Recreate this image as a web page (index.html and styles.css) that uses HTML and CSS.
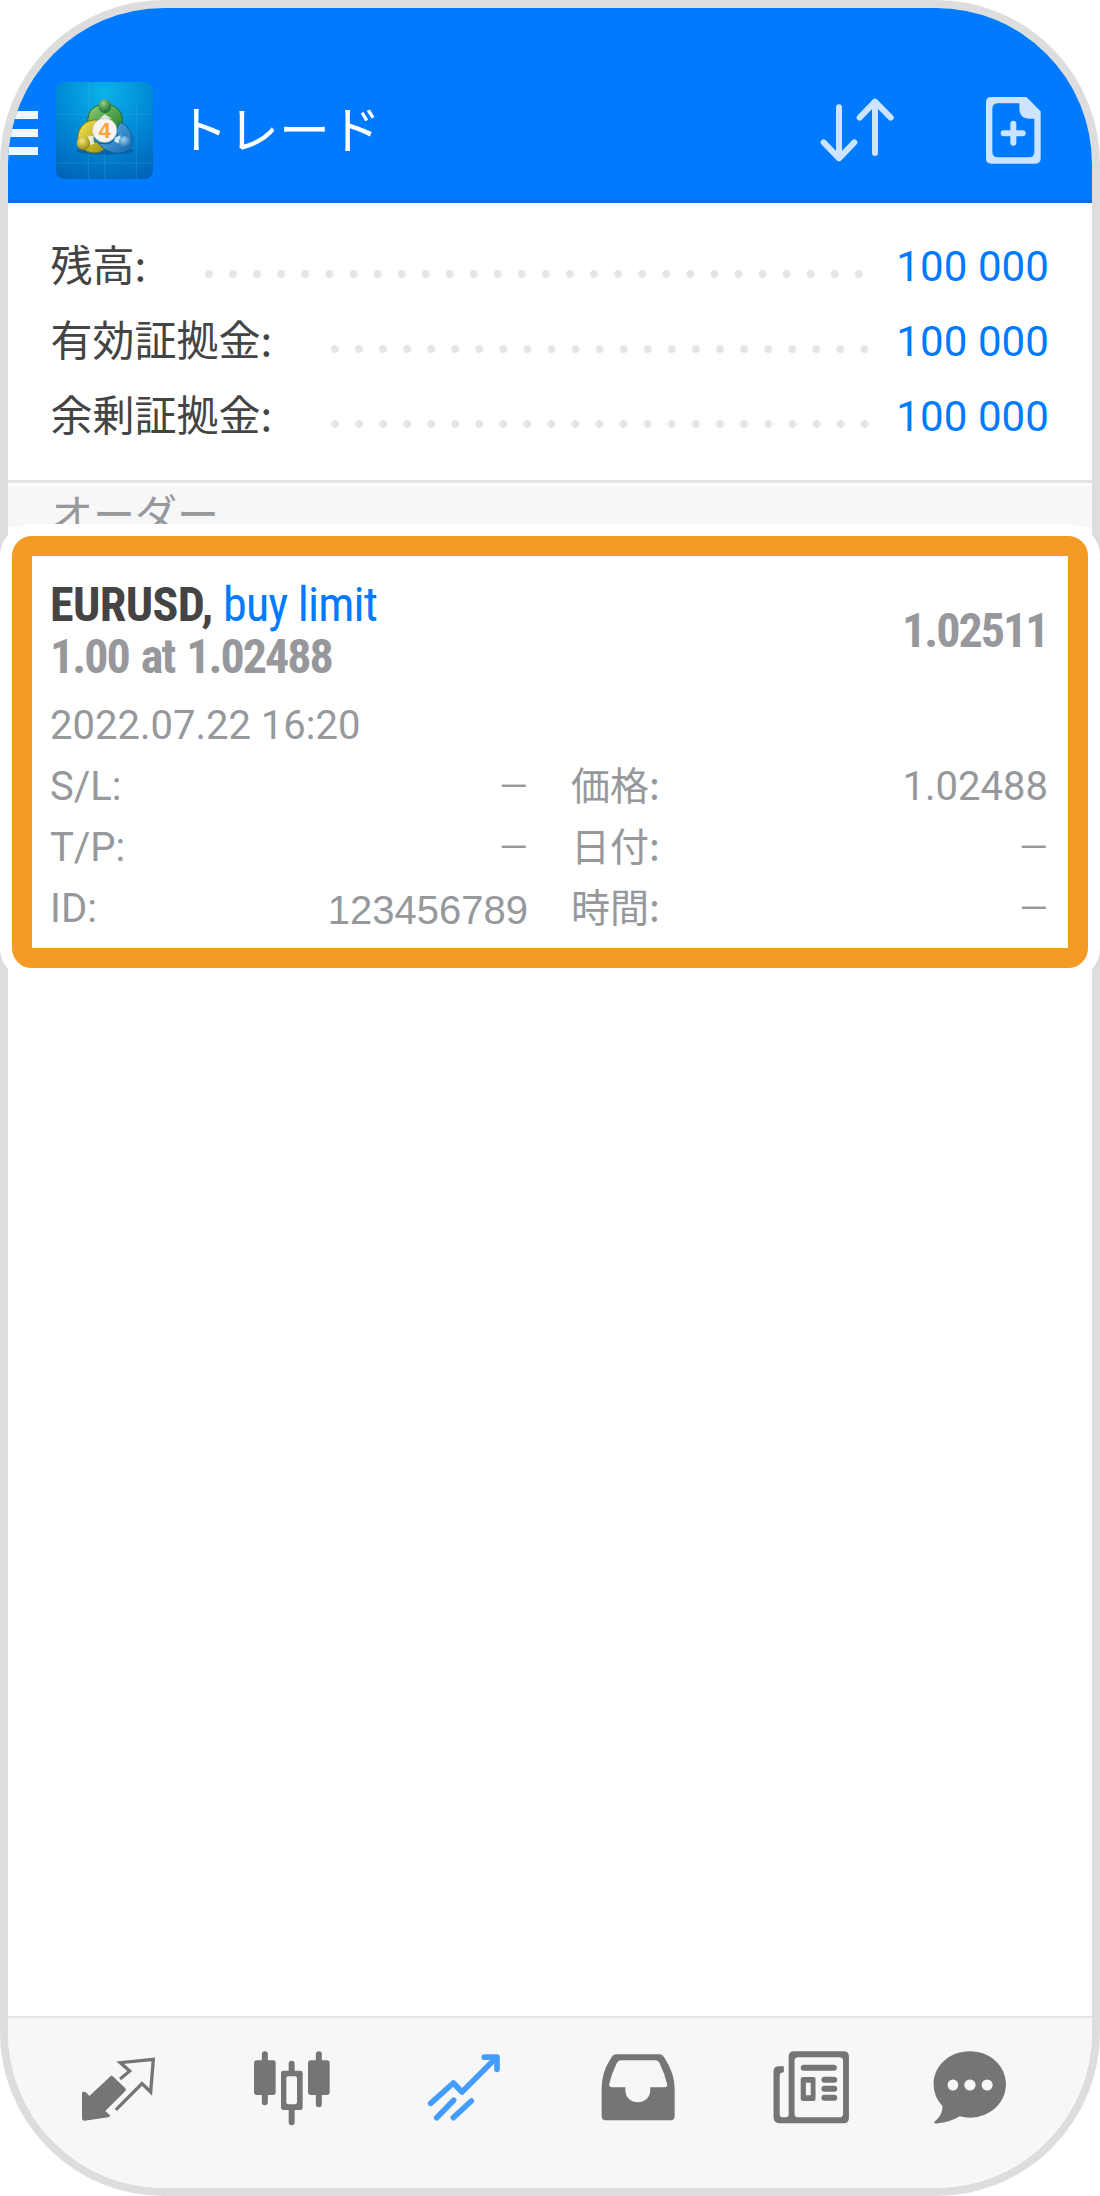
FILE: index.html
```html
<!DOCTYPE html>
<html lang="ja">
<head>
<meta charset="utf-8">
<title>トレード</title>
<link rel="stylesheet" href="styles.css">
</head>
<body>
<div class="phone">
  <header class="topbar">
    <div class="menu"><i></i><i></i><i></i></div>
    <svg class="logo" viewBox="48 36 291 291">
      <defs>
        <radialGradient id="tile" cx=".5" cy=".1" r="1"><stop offset="0" stop-color="#0bb2ea"/><stop offset=".5" stop-color="#0089d4"/><stop offset="1" stop-color="#0062b6"/></radialGradient>
        <linearGradient id="green" x2="1" y2="1"><stop offset="0" stop-color="#8fce74"/><stop offset="1" stop-color="#1f7a2c"/></linearGradient>
        <linearGradient id="gold" x2="1" y2="1"><stop offset="0" stop-color="#f4e650"/><stop offset="1" stop-color="#a39412"/></linearGradient>
        <linearGradient id="blue" x2="1" y2="1"><stop offset="0" stop-color="#5cb7ea"/><stop offset="1" stop-color="#1668ae"/></linearGradient>
        <radialGradient id="ballGreen" cx=".4" cy=".3" r=".7"><stop offset="0" stop-color="#8fd08a"/><stop offset="1" stop-color="#1c6b2c"/></radialGradient>
        <radialGradient id="ballGold" cx=".4" cy=".3" r=".7"><stop offset="0" stop-color="#f3ea80"/><stop offset="1" stop-color="#94850f"/></radialGradient>
        <radialGradient id="ballBlue" cx=".4" cy=".3" r=".7"><stop offset="0" stop-color="#9bd4f5"/><stop offset="1" stop-color="#1a6cb2"/></radialGradient>
      </defs>
      <rect x="48" y="36" width="291" height="291" rx="25" fill="url(#tile)"/>
      <path d="M145 36V326M289 95V326M48 133H339M48 279H339M194 240V326" stroke="#5cc0ee" stroke-opacity=".28" stroke-width="2.5"/>
      <ellipse cx="195" cy="242" rx="86" ry="12" fill="#00427e" opacity=".45"/>
      <path d="M144 158C140 120 165 103 195 103S252 122 246 160L236 188 210 150 195 138 178 150Z" fill="url(#green)" stroke="#1d6b32" stroke-width="3"/>
      <path d="M171 150C132 148 108 180 115 216 128 248 168 258 192 238L180 218 160 215Z" fill="url(#gold)" stroke="#827713" stroke-width="3"/>
      <path d="M240 158C268 165 282 198 274 232 248 262 198 250 174 219L205 222 232 205 230 178Z" fill="url(#blue)" stroke="#155f9c" stroke-width="3"/>
      <path d="M178 146L194 133 216 146Z M144 197L160 198 162 222 150 225Z M226 202L242 196 240 222 222 214Z" fill="#e6f3ec" opacity=".9"/>
      <ellipse cx="194" cy="108" rx="19" ry="21" fill="url(#ballGreen)"/>
      <circle cx="130" cy="220" r="20" fill="url(#ballGold)"/>
      <circle cx="254" cy="216" r="18" fill="url(#ballBlue)"/>
      <circle cx="194" cy="181" r="36" fill="#f6f4f2" stroke="#d5cfc8" stroke-width="2"/>
      <text class="logo-digit" x="194" y="205" text-anchor="middle">4</text>
    </svg>
    <h1>トレード</h1>
    <svg class="sort" viewBox="120 110 224 200" fill="none" stroke="#cce4ff" stroke-width="18" stroke-linecap="round" stroke-linejoin="round">
      <path d="M177 141V294M131 246L177 294 223 246M285 278V124M239 172L285 124 332 172"/>
    </svg>
    <svg class="new" viewBox="619 112 164 200">
      <path fill="#cce4ff" fill-rule="evenodd" d="M635 112H740L783 155V296Q783 312 767 312H635Q619 312 619 296V128Q619 112 635 112ZM655 131Q638 131 638 148V276Q638 293 655 293H748Q764 293 764 276V177H750Q719 177 719 145V131Z"/>
      <path d="M701 192V249M672 221H729" stroke="#cce4ff" stroke-width="18" stroke-linecap="round"/>
    </svg>
  </header>

  <section class="summary">
    <div class="sum-row first"><span>残高:</span><i class="dots"></i><b>100 000</b></div>
    <div class="sum-row"><span>有効証拠金:</span><i class="dots"></i><b>100 000</b></div>
    <div class="sum-row"><span>余剰証拠金:</span><i class="dots"></i><b>100 000</b></div>
  </section>

  <main class="orders">
    <h2>オーダー</h2>
    <article class="highlight">
      <div class="order">
        <div class="order-head">
          <div>
            <p class="cond symbol">EURUSD, <span class="side">buy limit</span></p>
            <p class="cond volume">1.00 at 1.02488</p>
          </div>
          <p class="cond price">1.02511</p>
        </div>
        <p class="date">2022.07.22 16:20</p>
        <dl class="details">
          <div><dt>S/L:</dt><dd class="none">–</dd></div><div><dt class="jp">価格:</dt><dd>1.02488</dd></div>
          <div><dt>T/P:</dt><dd class="none">–</dd></div><div><dt class="jp">日付:</dt><dd class="none">–</dd></div>
          <div><dt>ID:</dt><dd class="ticket">123456789</dd></div><div><dt class="jp">時間:</dt><dd class="none">–</dd></div>
        </dl>
      </div>
    </article>
  </main>

  <nav class="tabs">
    <svg viewBox="57 140 240 240" fill="#757575">
      <path d="M70 274L78 276 88 287 150 229Q155 224 160 229L196 264Q199 268 196 272L136 332 150 345Q152 350 145 351L74 361Q66 362 66 354V278Q66 274 70 274Z"/>
      <path d="M184 233L209 212 181 187 280 177 272 275 246 250 171 325" fill="none" stroke="#757575" stroke-width="10" stroke-linecap="square"/>
    </svg>
    <svg viewBox="576 140 240 240" fill="#757575">
      <rect x="582" y="180" width="65" height="104" rx="8"/><rect x="744" y="180" width="65" height="104" rx="8"/>
      <path fill-rule="evenodd" d="M670 211H721Q728 211 728 218V322Q728 329 721 329H670Q663 329 663 322V218Q663 211 670 211ZM685 228Q679 228 679 234V306Q679 312 685 312H705Q711 312 711 306V234Q711 228 705 228Z"/>
      <path d="M614.500 162V306M776.500 162V312M695 190V215M695 325V366" stroke="#757575" stroke-width="18" stroke-linecap="round"/>
    </svg>
    <svg viewBox="1095 140 240 240" fill="none" stroke="#429dff" stroke-width="17" stroke-linejoin="round" stroke-linecap="round">
      <path d="M1112 309L1180 248 1206 275 1307 174M1130 352L1181 300M1180 352L1234 302"/>
      <path d="M1273 170.500H1311V207"/>
    </svg>
    <svg viewBox="110.400 140 232.300 240" preserveAspectRatio="none" fill="#757575">
      <path fill-rule="evenodd" d="M164 162H288Q298 162 305 175 333 220 333 265V346Q333 360 319 360H134Q121 360 121 346V265Q121 215 147 175 154 162 164 162ZM176 180Q169 180 165 188 150 220 143 251 142 261 150 261H190V270C190 318 262 318 262 270V261H304Q313 261 311 251 304 220 289 188 285 180 278 180Z"/>
    </svg>
    <svg viewBox="612.700 140 232.300 240" preserveAspectRatio="none" fill="#757575">
      <path fill-rule="evenodd" d="M680 153H823Q839 153 839 169V353Q839 369 823 369H640Q620 369 620 350V214Q620 198 636 198H650V216Q638 216 638 227V342Q638 351 646 351H656Q664 351 664 342V169Q664 153 680 153ZM692 171Q681 171 681 182V340Q681 351 692 351H811Q822 351 822 340V182Q822 171 811 171Z"/>
      <path fill-rule="evenodd" d="M706 230H736Q742 230 742 236V296Q742 302 736 302H706Q699 302 699 296V236Q699 230 706 230ZM714 247V285H728V247Z"/>
      <path d="M708 202H795M768 238.500H796M768 265.500H796M768 292.500H796" stroke="#757575" stroke-width="18" stroke-linecap="round"/>
    </svg>
    <svg viewBox="1074.500 140 232.300 240" preserveAspectRatio="none" fill="#757575">
      <path d="M1190 153C1250 153 1295 197 1295 252S1250 352 1190 352Q1175 352 1161 348 1130 367 1098 369 1083 370 1087 365 1111 345 1111 318 1085 290 1085 252C1085 197 1130 153 1190 153Z"/>
      <g fill="#f7f7f7"><ellipse cx="1141" cy="254" rx="15.500" ry="16.500"/><ellipse cx="1190.500" cy="254" rx="16.500" ry="16.500"/><ellipse cx="1240.500" cy="254" rx="16" ry="16.500"/></g>
    </svg>
  </nav>
</div>
</body>
</html>
```
FILE: styles.css
```css
* { box-sizing: border-box; margin: 0; padding: 0; }
body {
  background: #fff;
  font-family: Roboto, "Noto Sans CJK JP", sans-serif;
}
.phone {
  width: 1100px;
  height: 2196px;
  border: 8px solid #ddd;
  border-radius: 164px;
  display: flex;
  flex-direction: column;
}
.topbar {
  height: 195px;
  display: flex;
  align-items: flex-start;
  background: #007aff;
  border-bottom: 3px solid #006fe8;
  border-radius: 156px 156px 0 0;
  overflow: hidden;
}
.menu {
  width: 30px;
  margin: 103px 18px 0 0;
  display: flex;
  flex-direction: column;
  gap: 10px;
}
.menu i { height: 8px; background: #f0f7ff; }
.logo { width: 97px; height: 97px; margin-top: 74px; }
.logo-digit { font: bold 66px "Liberation Sans", sans-serif; fill: #fba33c; }
.topbar h1 {
  margin: 83px 0 0 24px;
  font: 400 51px/72px "Noto Sans CJK JP", sans-serif;
  color: #fff;
}
.sort { width: 74.700px; height: 66.700px; margin: 88.700px 92px 0 auto; }
.new { width: 54.700px; height: 66.700px; margin: 89.300px 51px 0 0; }

.summary {
  height: 280px;
  padding: 25.500px 43px 0 42.500px;
  border-bottom: 3px solid #e5e5e5;
}
.sum-row {
  display: flex;
  height: 75.300px;
  font-size: 42px;
  line-height: 75.300px;
  color: #444;
}
.sum-row span { font-family: "Noto Sans CJK JP", sans-serif; line-height: 67.300px; }
.sum-row b { font-weight: 400; color: #007aff; letter-spacing: .1px; }
.dots {
  width: 553.600px;
  height: 8px;
  margin: 41px 19.500px 0 auto;
  background: radial-gradient(circle at 12px 4px, #e4e6e6 3.600px, transparent 4.300px) 0 0 / 24.070px 8px repeat-x;
}
.first .dots { width: 674px; margin-right: 25.500px; }

.orders { flex: 1; }
.orders h2 {
  height: 41px;
  margin-top: 3px;
  padding-left: 43px;
  overflow: hidden;
  background: #f7f7f7;
  font: 400 42px/52px "Noto Sans CJK JP", sans-serif;
  color: #96989c;
}
.highlight {
  position: relative;
  margin: -3px -8px 0;
  padding: 12px;
  background: #fff;
  border-radius: 32px;
}
.order {
  height: 432px;
  padding: 23px 19px 0 18px;
  border: 20px solid #f59b25;
  border-radius: 20px;
  color: #96989c;
}
.order-head { display: flex; align-items: center; justify-content: space-between; }
.cond {
  font-family: "Roboto Condensed", Roboto, sans-serif;
  font-stretch: 75%;
  font-size: 48px;
  line-height: 52px;
  font-weight: 700;
}
.symbol { color: #444; letter-spacing: -.6px; }
.side { font-weight: 400; color: #007aff; letter-spacing: -.8px; }
.volume { letter-spacing: -2px; word-spacing: 3px; }
.price { letter-spacing: -2px; margin-right: 1.500px; }
.date {
  margin-top: 12px;
  font-size: 40px;
  line-height: 61px;
}
.details {
  display: grid;
  grid-template-columns: 478px 477px;
  column-gap: 43px;
  font-size: 40px;
  line-height: 62px;
}
.details div { display: flex; justify-content: space-between; height: 61px; }
.details .jp { font: 400 39px/54px "Noto Sans CJK JP", sans-serif; }
.none { font-size: 49px; font-weight: 300; margin-right: -2px; }
.ticket { font-family: "Liberation Sans", sans-serif; line-height: 65px; }

.tabs {
  height: 172px;
  padding: 28.700px 0 0 24.500px;
  display: grid;
  grid-template-columns: repeat(5, 173px) 145px;
  justify-items: center;
  background: #f7f7f7;
  border-top: 2px solid #e5e5e5;
  border-radius: 0 0 156px 156px;
}
.tabs svg { width: 80px; height: 80px; }
```
